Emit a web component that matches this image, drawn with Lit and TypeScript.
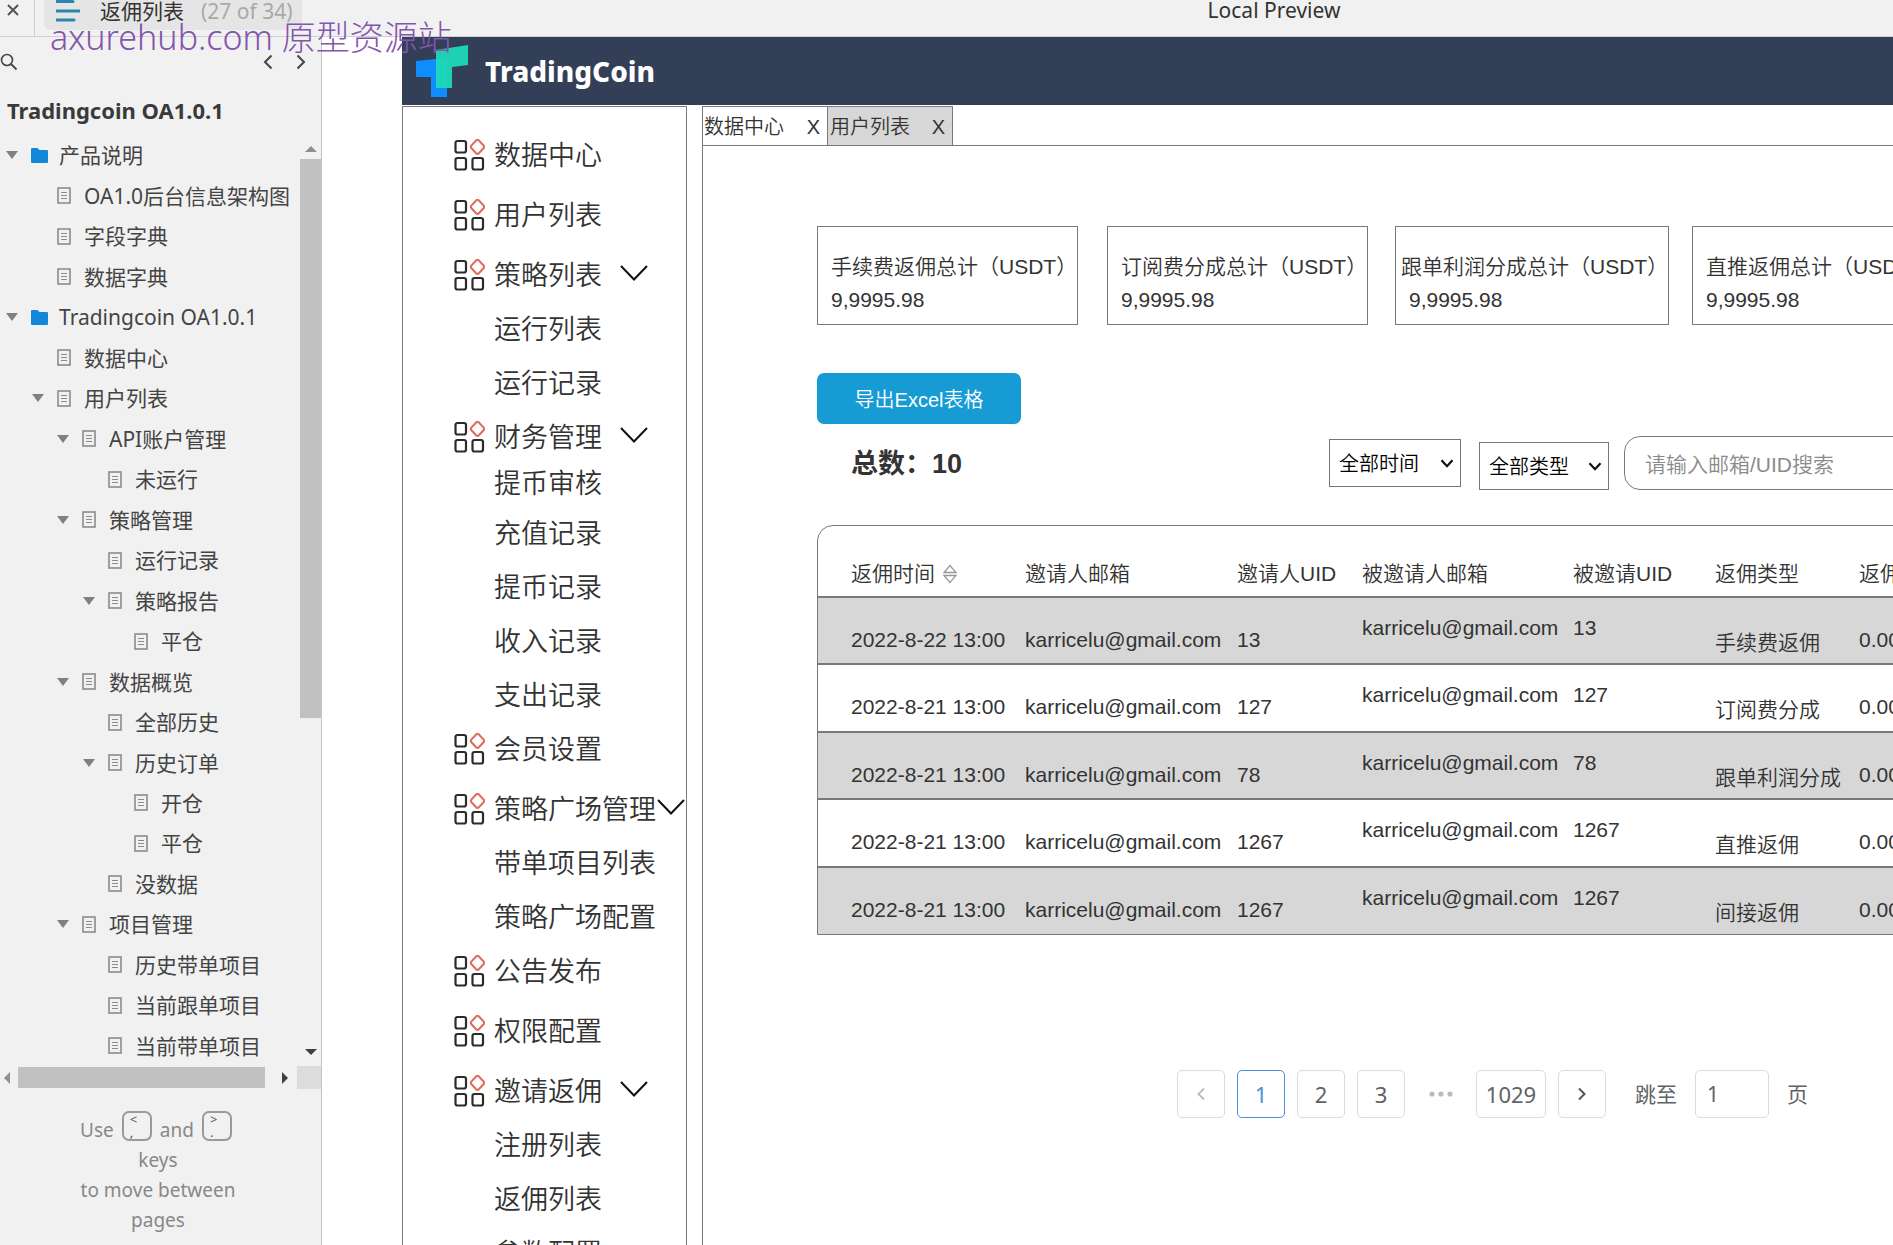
import { LitElement, html, css, svg, nothing } from "lit";
import { customElement } from "lit/decorators.js";

interface TreeNode { label: string; level: number; open?: boolean; folder?: boolean; }
interface MenuNode { label: string; sub?: boolean; tight?: boolean; arrow?: boolean; }

const TREE: TreeNode[] = [
  { label: "产品说明", level: 0, open: true, folder: true },
  { label: "OA1.0后台信息架构图", level: 1 },
  { label: "字段字典", level: 1 },
  { label: "数据字典", level: 1 },
  { label: "Tradingcoin OA1.0.1", level: 0, open: true, folder: true },
  { label: "数据中心", level: 1 },
  { label: "用户列表", level: 1, open: true },
  { label: "API账户管理", level: 2, open: true },
  { label: "未运行", level: 3 },
  { label: "策略管理", level: 2, open: true },
  { label: "运行记录", level: 3 },
  { label: "策略报告", level: 3, open: true },
  { label: "平仓", level: 4 },
  { label: "数据概览", level: 2, open: true },
  { label: "全部历史", level: 3 },
  { label: "历史订单", level: 3, open: true },
  { label: "开仓", level: 4 },
  { label: "平仓", level: 4 },
  { label: "没数据", level: 3 },
  { label: "项目管理", level: 2, open: true },
  { label: "历史带单项目", level: 3 },
  { label: "当前跟单项目", level: 3 },
  { label: "当前带单项目", level: 3 },
];

const MENU: MenuNode[] = [
  { label: "数据中心" },
  { label: "用户列表" },
  { label: "策略列表", arrow: true },
  { label: "运行列表", sub: true },
  { label: "运行记录", sub: true },
  { label: "财务管理", arrow: true },
  { label: "提币审核", sub: true, tight: true },
  { label: "充值记录", sub: true },
  { label: "提币记录", sub: true },
  { label: "收入记录", sub: true },
  { label: "支出记录", sub: true },
  { label: "会员设置" },
  { label: "策略广场管理", arrow: true },
  { label: "带单项目列表", sub: true },
  { label: "策略广场配置", sub: true },
  { label: "公告发布" },
  { label: "权限配置" },
  { label: "邀请返佣", arrow: true },
  { label: "注册列表", sub: true },
  { label: "返佣列表", sub: true },
  { label: "参数配置", sub: true },
];

const CARDS = ["手续费返佣总计（USDT）", "订阅费分成总计（USDT）", "跟单利润分成总计（USDT）", "直推返佣总计（USDT）"];

const MAIL = "karricelu@gmail.com";
const ROWS = [
  ["2022-8-22 13:00", "13", "手续费返佣"],
  ["2022-8-21 13:00", "127", "订阅费分成"],
  ["2022-8-21 13:00", "78", "跟单利润分成"],
  ["2022-8-21 13:00", "1267", "直推返佣"],
  ["2022-8-21 13:00", "1267", "间接返佣"],
];

const icon = (w: number, h: number, body: unknown) =>
  html`<svg width=${w} height=${h} viewBox="0 0 ${w} ${h}" fill="none" aria-hidden="true">${body}</svg>`;

const folderIcon = () => icon(17, 15, svg`<path d="M0 1q0-1 1-1h5.500l2 2H16q1 0 1 1v11q0 1-1 1H1q-1 0-1-1z" fill="#1488d8"/>`);
const docIcon = () => icon(14, 17, svg`<rect x="1" y="1" width="12" height="15" stroke="#8c8c8c" stroke-width="1.600"/><path d="M4 5.500h6M4 8.500h6M4 11.500h6" stroke="#8c8c8c" stroke-width="1.200"/>`);
const gridIcon = () => icon(31, 32, svg`
  <g stroke="#2b2b2b" stroke-width="2.200"><rect x="1.500" y="2" width="10.500" height="11.500" rx="2"/><rect x="1.500" y="19" width="10.500" height="11.500" rx="2"/><rect x="18.500" y="19" width="10.500" height="11.500" rx="2"/></g>
  <path d="M22.300 1.200q1.200-1 2.400 0l5 5.400q1 1.200 0 2.400l-5 5.400q-1.200 1-2.400 0l-5-5.400q-1-1.200 0-2.400z" stroke="#e06a5a" stroke-width="2"/>`);
const downIcon = () => icon(28, 16, svg`<path d="M1 1l13 13.500L27 1" stroke="#111" stroke-width="2"/>`);
const caret = () => icon(14, 9, svg`<path d="M1.500 1.200l5.500 6 5.500-6" stroke="#111" stroke-width="2.200"/>`);
const tri = (points: string, color: string) => icon(12, 12, svg`<polygon points=${points} fill=${color}/>`);

@customElement("app-root")
export class AppRoot extends LitElement {
  static styles = css`
    :host { display: block; height: 100vh; overflow: hidden; background: #fff; color: #333;
      font-family: "Liberation Sans", "Noto Sans CJK SC", sans-serif; font-size: 21px; line-height: 30px; }
    * { box-sizing: border-box; }
    svg { display: block; flex: none; }
    ul { list-style: none; margin: 0; padding: 0; }
    a { color: inherit; text-decoration: none; }
    button { font: inherit; color: inherit; background: none; border: 0; padding: 0; cursor: pointer; }
    .page { display: flex; flex-direction: column; height: 100%; position: relative; }
    .ui { font-family: "Noto Sans", "Noto Sans CJK SC", sans-serif; }

    .topbar { display: grid; grid-template-columns: 35px 1fr; flex: none; height: 37px; background: #f1f1f1; border-bottom: 1px solid #d0d0d0; }
    .close { display: flex; padding: 4px 0 0 7px; height: 36px; border-right: 1px solid #cfcfcf; }
    .barbody { display: grid; grid-template-columns: 1fr auto 1fr; }
    .pill { display: flex; align-items: center; justify-self: start; gap: 20px; height: 30px; margin-left: 9px; padding: 0 9px 8px 12px;
      background: #e5e5e5; border-radius: 0 0 6px 6px; white-space: nowrap; color: #333; }
    .pill .count { color: #a9a9a9; margin-left: -3px; }
    .preview { font-size: 21px; line-height: 20px; color: #333; margin-left: 620px; }
    .mark { position: absolute; left: 50px; top: 14px; font-family: "Noto Sans", "Noto Sans CJK SC", sans-serif; font-size: 34px; line-height: 46px;
      font-weight: 300; color: #8355ad; white-space: nowrap; pointer-events: none; }

    .body { flex: 1; display: flex; min-height: 0; }
    .side { flex: none; width: 322px; display: flex; flex-direction: column; background: #f1f1f1; border-right: 1px solid #c6c6c6; }
    .tools { display: flex; align-items: center; height: 50px; padding-right: 15px; }
    .tools .prev { margin-left: auto; margin-right: 23px; }
    .title { margin: 0; padding-left: 7px; height: 48px; line-height: 46px; font-size: 22px; font-weight: 700; color: #3a3a3a; }
    .treewrap { flex: 1; min-height: 0; display: flex; }
    .tree { flex: 1; display: flex; flex-direction: column; min-width: 0; }
    .node { flex: 1; display: flex; align-items: center; white-space: nowrap; color: #444; }
    .node a { display: flex; align-items: center; gap: 13px; }
    .node a.folder { gap: 11px; }
    .twist { width: 25px; flex: none; }
    .l0 { padding-left: 6px; } .l1 { padding-left: 32px; } .l2 { padding-left: 57px; }
    .l3 { padding-left: 83px; } .l4 { padding-left: 109px; }
    .vbar { width: 21px; display: flex; flex-direction: column; align-items: center; padding: 4px 0; }
    .vbar .end { height: 20px; display: flex; align-items: center; }
    .vthumb { width: 100%; flex: 62; background: #c1c1c1; }
    .vrest { flex: 36; }
    .hbar { height: 23px; display: flex; align-items: center; }
    .hbar .end { width: 18px; flex: none; display: flex; justify-content: center; padding-right: 4px; }
    .hthumb { flex: 1; height: 21px; background: #c1c1c1; }
    .hbar .right { width: 32px; padding-left: 8px; padding-right: 0; }
    .corner { width: 24px; height: 23px; background: #dcdcdc; }
    .hint { margin: 0; padding: 22px 0 10px; width: 316px; text-align: center; font-size: 19px; color: #888; }
    .keys { display: flex; justify-content: center; align-items: flex-end; gap: 8px; height: 34px; padding-right: 4px; }
    kbd { display: flex; flex-direction: column; align-self: flex-start; width: 30px; height: 30px; padding: 0 0 0 6px;
      border: 2px solid #9a9a9a; border-radius: 7px; font-family: inherit; font-size: 13px; line-height: 13px; color: #555; text-align: left; }

    .stage { flex: 1; min-width: 0; display: flex; flex-direction: column; gap: 1px; margin-left: 80px; overflow: hidden; }
    .brand { display: flex; align-items: center; gap: 17px; flex: none; height: 68px; padding-left: 14px; background: #323f57;
      color: #fff; font-size: 28px; font-weight: 800; }
    .cols { flex: 1; min-height: 0; display: grid; grid-template-columns: 285px minmax(0, 1fr); gap: 15px; font-weight: 350; }
    .menu { border: 1px solid #797979; border-bottom: 0; padding: 21px 0 0 51px; overflow: hidden; font-size: 27px; }
    .item { display: flex; align-items: center; height: 54px; white-space: nowrap; }
    .item.gap { margin-bottom: 6px; }
    .item.sub { padding-left: 40px; }
    .item.tight { height: 38px; margin-bottom: 4px; }
    .item a { display: flex; align-items: center; gap: 9px; }
    .item span { padding-top: 2px; }
    .item .arrow { margin-left: 18px; padding-bottom: 4px; }
    .item .arrow.near { margin-left: 1px; }

    .main { display: flex; flex-direction: column; min-width: 0; overflow: hidden; }
    .tabs { display: flex; flex: none; height: 40px; border-left: 1px solid #797979; border-bottom: 1px solid #797979; }
    .tab { display: flex; align-items: center; justify-content: space-between; width: 125px; padding: 2px 7px 0 1px; font-size: 20px;
      border: 1px solid #797979; border-left: 0; border-bottom: 0; }
    .tab.on { background: #d7d7d7; padding-left: 2px; }
    .content { flex: 1; border-left: 1px solid #797979; padding: 80px 0 0 114px; overflow: hidden; }
    .cards { display: grid; grid-template-columns: 290px 288px 297px 262px; }
    .card { width: 261px; height: 99px; padding: 23px 0 0 13px; border: 1px solid #797979; line-height: 33px; white-space: nowrap; }
    .card p { margin: 0; }
    .card.wide { width: 274px; padding-left: 5px; }
    .card.wide .num { padding-left: 8px; }
    .export { display: block; width: 204px; height: 51px; margin-top: 48px; border-radius: 7px; background: #169bd5; color: #fff; font-size: 20px; padding-top: 2px; }
    .filters { display: flex; align-items: flex-start; padding-left: 34px; margin-top: 12px; }
    .total { flex: none; margin: 0; padding-top: 13px; font-size: 27px; font-weight: 700; width: 478px; height: 54px; }
    .pick { flex: none; display: grid; align-items: center; margin-top: 3px; width: 132px; height: 48px; }
    .pick select, .pick svg { grid-area: 1 / 1; }
    .pick svg { justify-self: end; margin-right: 7px; pointer-events: none; }
    .pick.later { margin: 6px 15px 0 18px; width: 130px; }
    select { appearance: none; width: 100%; height: 100%; padding: 2px 0 0 9px; border: 1px solid #767676; border-radius: 0; background: #fff; color: #000;
      font: inherit; font-size: 20px; }
    .search { flex: none; width: 400px; height: 54px; padding: 4px 20px 0; border: 1px solid #797979; border-radius: 16px; font: inherit; background: #fff; }
    .search::placeholder { color: #8a8a8a; opacity: 1; }

    .tablebox { width: 1400px; margin-top: 35px; border: 1px solid #797979; border-radius: 16px 0 0 0; overflow: hidden; }
    table { border-collapse: collapse; table-layout: fixed; width: 100%; }
    th { height: 71px; padding: 26px 0 0; text-align: left; font-weight: inherit; white-space: nowrap; }
    td { height: 67px; padding: 18px 0 0; vertical-align: middle; white-space: nowrap; }
    tbody tr:nth-child(even) td { height: 68px; }
    tbody tr { border-top: 2px solid #797979; }
    tbody tr:nth-child(odd) { background: #d7d7d7; }
    td.high { padding: 0 0 6px; }
    td.low { padding-top: 24px; }
    th:first-child, td:first-child { padding-left: 33px; }
    .sort { display: flex; align-items: center; gap: 8px; height: 30px; }
    .c1 { width: 207px; } .c2 { width: 212px; } .c3 { width: 125px; } .c4 { width: 211px; } .c5 { width: 142px; } .c6 { width: 144px; }

    .pager { display: flex; align-items: center; gap: 12px; margin: 135px 0 0 360px; font-size: 22px; font-weight: 400; color: #606266; white-space: nowrap; }
    .pg { display: flex; align-items: center; justify-content: center; width: 48px; height: 48px; border: 1px solid #dcdcdc; border-radius: 5px; }
    .pg.on { border-color: #4a90d9; color: #4a90d9; }
    .pg.long { width: 70px; }
    .dots { width: 47px; display: flex; justify-content: center; }
    .jump { display: flex; align-items: center; gap: 18px; margin-left: 17px; font-size: 21px; }
    .jump input { width: 74px; height: 48px; padding: 0 11px; border: 1px solid #dcdcdc; border-radius: 5px; font: inherit; color: #606266; background: #fff; }
  `;

  private node(n: TreeNode) {
    return html`<li class="node l${n.level}">
      ${n.open
        ? html`<button class="twist" aria-label="折叠 ${n.label}">${tri("0,2 12,2 6,10", "#808080")}</button>`
        : html`<span class="twist"></span>`}
      <a href="#" class=${n.folder ? "folder" : "doc"}>${n.folder ? folderIcon() : docIcon()}<span>${n.label}</span></a>
    </li>`;
  }

  private item(n: MenuNode, i: number) {
    const next = MENU[i + 1];
    const cls = ["item", n.sub ? "sub" : "", n.tight ? "tight" : "", !n.sub && next && !next.sub ? "gap" : ""].join(" ");
    return html`<li class=${cls}>
      <a href="#">${n.sub ? nothing : gridIcon()}<span>${n.label}</span></a>
      ${n.arrow ? html`<button class="arrow ${n.label.length > 4 ? "near" : ""}" aria-label="展开 ${n.label}">${downIcon()}</button>` : nothing}
    </li>`;
  }

  render() {
    return html`<div class="page">
      <header class="topbar ui">
        <button class="close" aria-label="关闭">${icon(12, 12, svg`<path d="M1 1l10 10M11 1L1 11" stroke="#555" stroke-width="2"/>`)}</button>
        <div class="barbody">
          <div class="pill">
            ${icon(24, 22, svg`<path d="M1 1.500h16M1 11h22M1 20h17" stroke="#2a86b0" stroke-width="3" stroke-linecap="round"/>`)}
            <span>返佣列表</span><span class="count">(27 of 34)</span>
          </div>
          <span class="preview">Local Preview</span>
        </div>
      </header>
      <div class="body">
        <aside class="side ui">
          <div class="tools">
            <button aria-label="搜索">${icon(18, 18, svg`<circle cx="7" cy="7" r="5.500" stroke="#444" stroke-width="1.600"/><path d="M11 11l5.500 5.500" stroke="#444" stroke-width="1.800"/>`)}</button>
            <button class="prev" aria-label="上一页">${icon(10, 16, svg`<path d="M8.500 1.500L2 8l6.500 6.500" stroke="#444" stroke-width="2"/>`)}</button>
            <button aria-label="下一页">${icon(10, 16, svg`<path d="M1.500 1.500L8 8l-6.500 6.500" stroke="#444" stroke-width="2"/>`)}</button>
          </div>
          <h1 class="title">Tradingcoin OA1.0.1</h1>
          <div class="treewrap">
            <ul class="tree">${TREE.map((n) => this.node(n))}</ul>
            <div class="vbar" aria-hidden="true">
              <span class="end">${tri("0,9 6,3 12,9", "#8f8f8f")}</span>
              <span class="vthumb"></span><span class="vrest"></span>
              <span class="end">${tri("0,3 12,3 6,9", "#404040")}</span>
            </div>
          </div>
          <div class="hbar" aria-hidden="true">
            <span class="end">${tri("9,0 3,6 9,12", "#8f8f8f")}</span>
            <span class="hthumb"></span>
            <span class="end right">${tri("3,0 9,6 3,12", "#404040")}</span>
            <span class="corner"></span>
          </div>
          <div class="hint">
            <div class="keys"><span>Use</span><kbd><span>&lt;</span><span>,</span></kbd><span>and</span><kbd><span>&gt;</span><span>.</span></kbd></div>
            <div>keys</div><div>to move between</div><div>pages</div>
          </div>
        </aside>
        <div class="stage">
          <div class="brand ui">
            ${icon(52, 52, svg`<path d="M0 16l20-2h11v38H15V32H0z" fill="#0f8dff"/><path d="M20 5l32-5v20l-16 2v21H20z" fill="#1fd9b8" fill-opacity=".95"/>`)}
            <span>TradingCoin</span>
          </div>
          <div class="cols">
            <nav class="menu"><ul>${MENU.map((n, i) => this.item(n, i))}</ul></nav>
            <main class="main">
              <div class="tabs">
                <button class="tab"><span>数据中心</span><span>X</span></button>
                <button class="tab on"><span>用户列表</span><span>X</span></button>
              </div>
              <div class="content">
                <div class="cards">
                  ${CARDS.map((c, i) => html`<section class="card ${i === 2 ? "wide" : ""}"><p>${c}</p><p class="num">9,9995.98</p></section>`)}
                </div>
                <button class="export">导出Excel表格</button>
                <div class="filters">
                  <h2 class="total">总数：10</h2>
                  <label class="pick"><select aria-label="时间"><option>全部时间</option></select>${caret()}</label>
                  <label class="pick later"><select aria-label="类型"><option>全部类型</option></select>${caret()}</label>
                  <input class="search" type="text" aria-label="搜索" placeholder="请输入邮箱/UID搜索" />
                </div>
                <div class="tablebox">
                  <table>
                    <thead><tr>
                      <th class="c1"><span class="sort">返佣时间 ${icon(14, 20, svg`<path d="M1 8.500L7 1.500l6 7zM1 11.500l6 7 6-7z" stroke="#999" stroke-width="1.300"/>`)}</span></th>
                      <th class="c2">邀请人邮箱</th><th class="c3">邀请人UID</th><th class="c4">被邀请人邮箱</th>
                      <th class="c5">被邀请UID</th><th class="c6">返佣类型</th><th>返佣</th>
                    </tr></thead>
                    <tbody>
                      ${ROWS.map(([time, uid, kind]) => html`<tr>
                        <td>${time}</td><td>${MAIL}</td><td>${uid}</td>
                        <td class="high">${MAIL}</td><td class="high">${uid}</td>
                        <td class="low">${kind}</td><td>0.00</td>
                      </tr>`)}
                    </tbody>
                  </table>
                </div>
                <nav class="pager ui">
                  <button class="pg" aria-label="上一页">${icon(10, 14, svg`<path d="M8 1.500L2.500 7 8 12.500" stroke="#bbb" stroke-width="1.800"/>`)}</button>
                  <button class="pg on">1</button><button class="pg">2</button><button class="pg">3</button>
                  <span class="dots">${icon(26, 6, svg`<g fill="#bbb"><circle cx="4" cy="3" r="2.600"/><circle cx="13" cy="3" r="2.600"/><circle cx="22" cy="3" r="2.600"/></g>`)}</span>
                  <button class="pg long">1029</button>
                  <button class="pg" aria-label="下一页">${icon(10, 14, svg`<path d="M2 1.500L7.500 7 2 12.500" stroke="#555" stroke-width="2"/>`)}</button>
                  <label class="jump">跳至 <input type="text" .value=${"1"} /> 页</label>
                </nav>
              </div>
            </main>
          </div>
        </div>
      </div>
      <div class="mark">axurehub.com 原型资源站</div>
    </div>`;
  }
}
